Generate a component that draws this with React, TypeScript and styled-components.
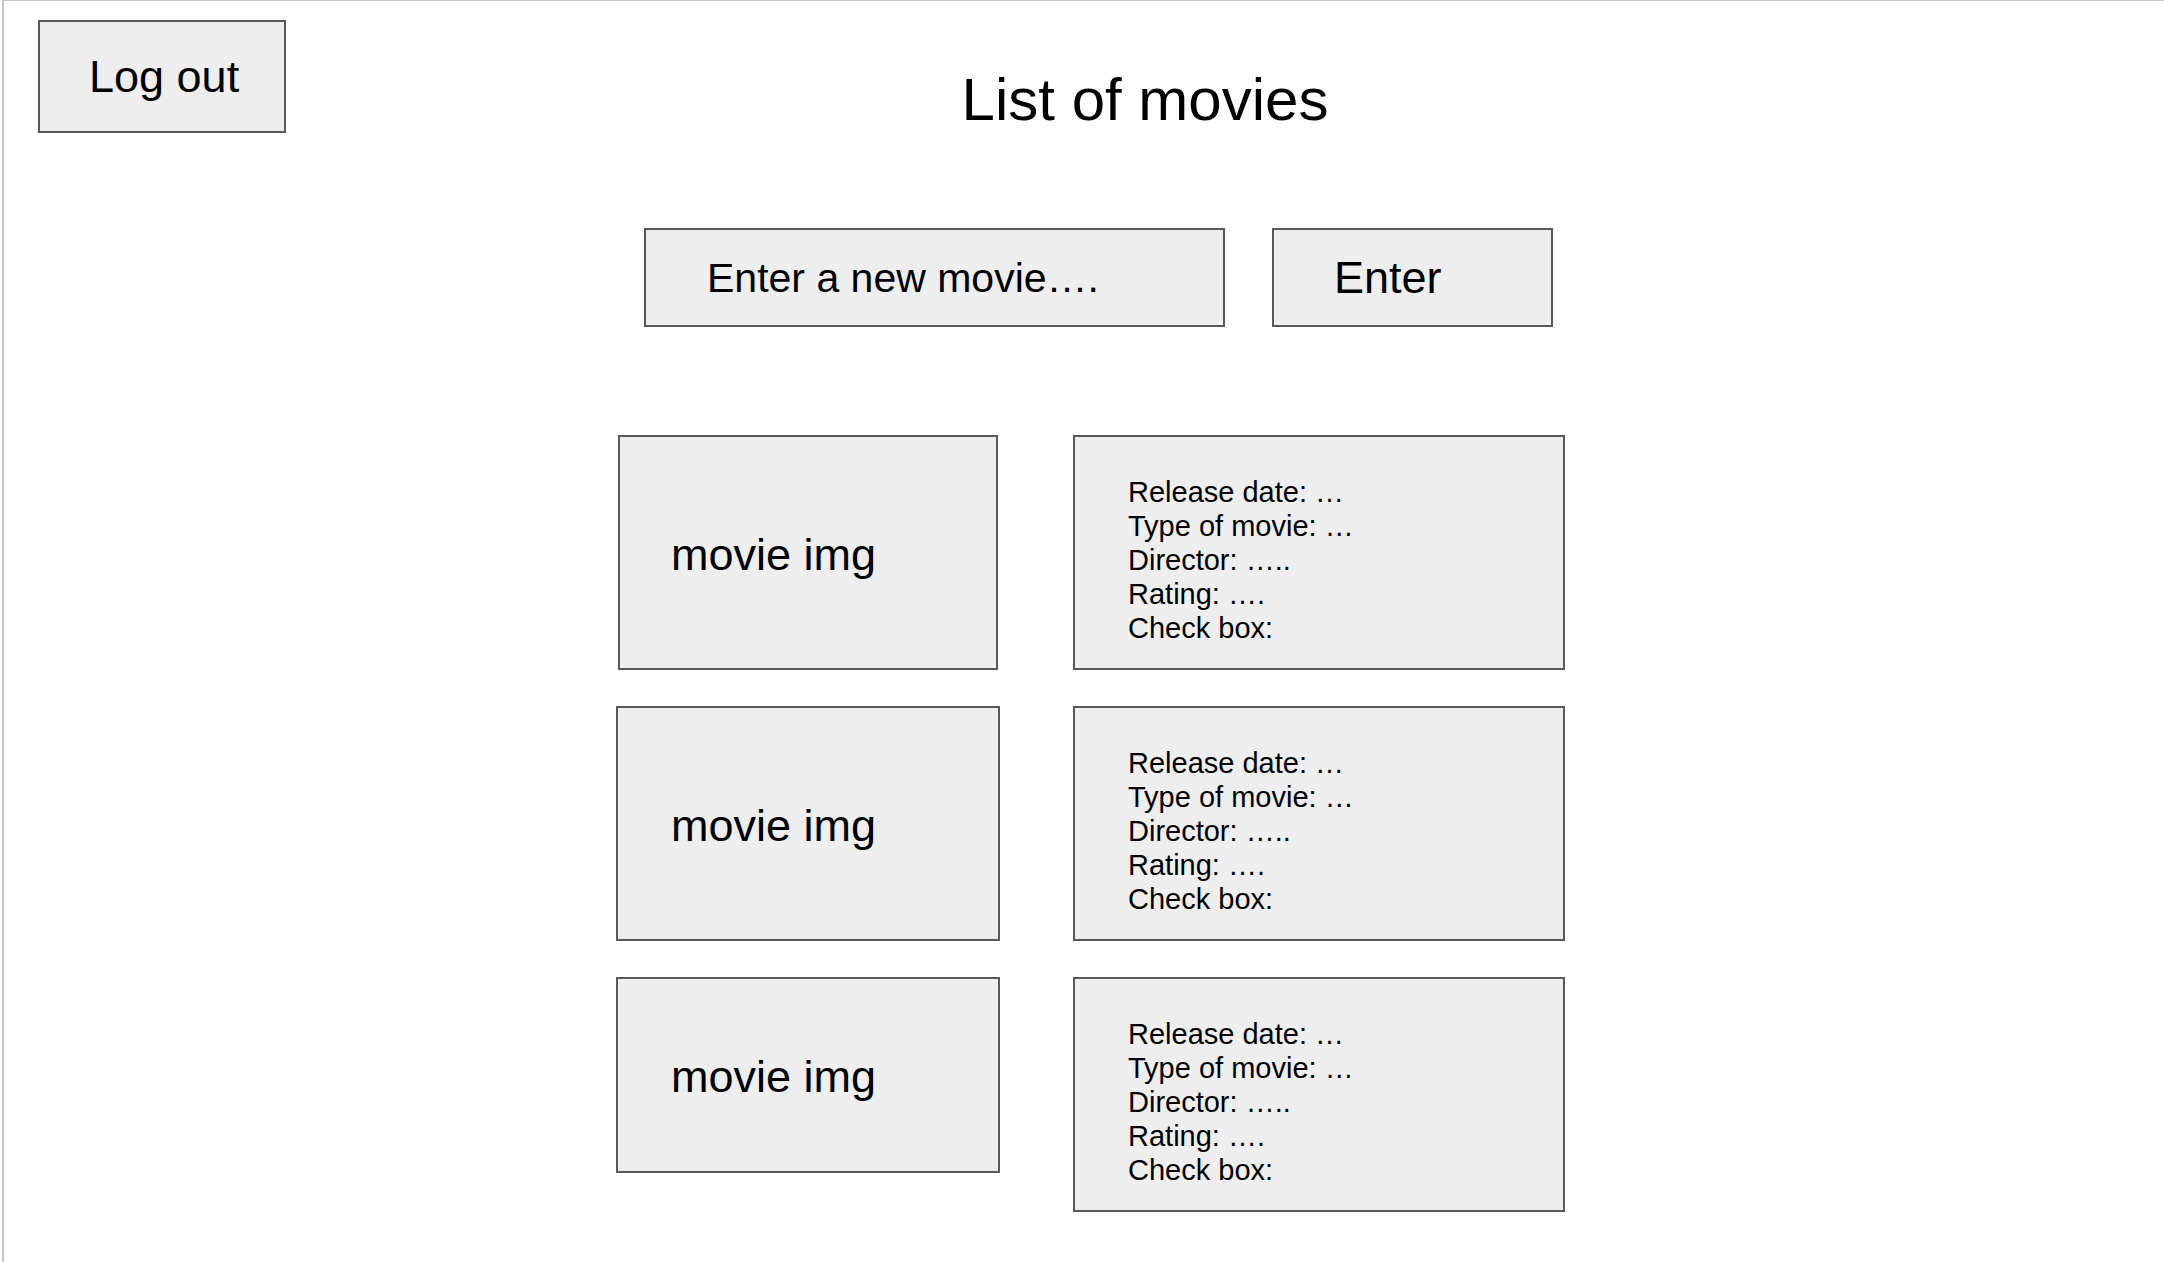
import React from "react";
import styled, { createGlobalStyle, css } from "styled-components";

const GlobalStyle = createGlobalStyle`
  *, *::before, *::after { box-sizing: border-box; }
  body {
    margin: 0;
    background: #fff;
    color: #000;
    font-family: "Liberation Sans", Arial, sans-serif;
  }
`;

const panel = css`
  background: #eee;
  border: 2px solid #595959;
  border-radius: 0;
  color: #000;
  font-family: inherit;
`;

const Page = styled.div`
  min-height: 100vh;
  margin-left: 2px;
  border-left: 2px solid #c4c6c5;
  border-top: 1px solid #c4c6c5;
`;

const Header = styled.header`
  display: grid;
  grid-template-columns: 1fr auto 1fr;
  align-items: start;
  padding: 19px 0 0 34px;
`;

const LogoutButton = styled.button`
  ${panel}
  justify-self: start;
  width: 248px;
  height: 113px;
  padding: 0 0 0 49px;
  font-size: 45px;
  text-align: left;
`;

const Title = styled.h1`
  margin: 0;
  padding: 46px 0 0 88px;
  font-size: 60px;
  font-weight: 400;
  line-height: 68px;
`;

const Main = styled.main`
  width: 100%;
  max-width: 962px;
  margin: 0 auto;
  padding: 94px 0 36px 13px;
`;

const MovieForm = styled.form`
  display: flex;
  gap: 47px;
  padding-left: 28px;
`;

const MovieInput = styled.input`
  ${panel}
  width: 581px;
  height: 99px;
  padding: 2px 0 0 61px;
  font-size: 41px;

  &::placeholder {
    color: #000;
    opacity: 1;
  }
`;

const EnterButton = styled.button`
  ${panel}
  width: 281px;
  height: 99px;
  padding: 0 0 0 60px;
  font-size: 45px;
  text-align: left;
`;

const MovieList = styled.ul`
  display: grid;
  gap: 36px;
  margin: 108px 0 0;
  padding: 0;
  list-style: none;
`;

const MovieRow = styled.li`
  display: grid;
  grid-template-columns: 384fr 492fr;
  column-gap: 73px;
`;

const Poster = styled.div<{ $size: "narrow" | "regular" | "short" }>`
  ${panel}
  display: flex;
  align-items: center;
  height: ${(p) => (p.$size === "short" ? 196 : 235)}px;
  margin: 0 ${(p) => (p.$size === "narrow" ? 2 : 0)}px;
  padding: 4px 0 0 ${(p) => (p.$size === "narrow" ? 51 : 53)}px;
  font-size: 45px;
`;

const Details = styled.div`
  ${panel}
  height: 235px;
  padding: 38px 0 0 53px;
  font-size: 29px;
  line-height: 34px;
`;

const Detail = styled.p`
  margin: 0;
`;

type Movie = { id: number; size: "narrow" | "regular" | "short" };

const movies: Movie[] = [
  { id: 1, size: "narrow" },
  { id: 2, size: "regular" },
  { id: 3, size: "short" },
];

const details = [
  "Release date: …",
  "Type of movie: …",
  "Director: …..",
  "Rating: ….",
  "Check box:",
];

export default function App() {
  return (
    <>
      <GlobalStyle />
      <Page>
        <Header>
          <LogoutButton type="button">Log out</LogoutButton>
          <Title>List of movies</Title>
        </Header>
        <Main>
          <MovieForm onSubmit={(e) => e.preventDefault()}>
            <MovieInput
              type="text"
              aria-label="Enter a new movie"
              placeholder="Enter a new movie…."
            />
            <EnterButton type="submit">Enter</EnterButton>
          </MovieForm>
          <MovieList>
            {movies.map((movie) => (
              <MovieRow key={movie.id}>
                <Poster $size={movie.size}>movie img</Poster>
                <Details>
                  {details.map((line) => (
                    <Detail key={line}>{line}</Detail>
                  ))}
                </Details>
              </MovieRow>
            ))}
          </MovieList>
        </Main>
      </Page>
    </>
  );
}
